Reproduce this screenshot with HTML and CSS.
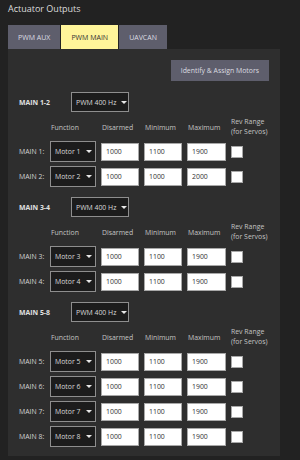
FILE: index.html
```html
<!DOCTYPE html>
<html lang="en">
<head>
    <meta charset="UTF-8">
    <meta name="viewport" content="width=device-width, initial-scale=1.0">
    <title>Actuator Outputs</title>
    <link rel="stylesheet" href="styles.css">
</head>
<body>
    <h1 class="title">Actuator Outputs</h1>

    <div class="tabs">
        <button type="button" class="tab">PWM AUX</button>
        <button type="button" class="tab active">PWM MAIN</button>
        <button type="button" class="tab">UAVCAN</button>
    </div>

    <div class="panel">
        <div class="toolbar">
            <button type="button" class="btn">Identify &amp; Assign Motors</button>
        </div>

        <!-- MAIN 1-2 -->
        <section class="group">
            <div class="group-head">
                <span class="group-name">MAIN 1-2</span>
                <div class="select rate">PWM 400 Hz <span class="caret"></span></div>
            </div>
            <div class="grid">
                <span></span>
                <span class="col">Function</span>
                <span class="col">Disarmed</span>
                <span class="col">Minimum</span>
                <span class="col">Maximum</span>
                <span class="col rev">Rev Range<br>(for Servos)</span>

                <span class="ch">MAIN 1:</span>
                <div class="select">Motor 1 <span class="caret"></span></div>
                <input type="text" value="1000">
                <input type="text" value="1100">
                <input type="text" value="1900">
                <input type="checkbox">

                <span class="ch">MAIN 2:</span>
                <div class="select">Motor 2 <span class="caret"></span></div>
                <input type="text" value="1000">
                <input type="text" value="1000">
                <input type="text" value="2000">
                <input type="checkbox">
            </div>
        </section>

        <!-- MAIN 3-4 -->
        <section class="group">
            <div class="group-head">
                <span class="group-name">MAIN 3-4</span>
                <div class="select rate">PWM 400 Hz <span class="caret"></span></div>
            </div>
            <div class="grid">
                <span></span>
                <span class="col">Function</span>
                <span class="col">Disarmed</span>
                <span class="col">Minimum</span>
                <span class="col">Maximum</span>
                <span class="col rev">Rev Range<br>(for Servos)</span>

                <span class="ch">MAIN 3:</span>
                <div class="select">Motor 3 <span class="caret"></span></div>
                <input type="text" value="1000">
                <input type="text" value="1100">
                <input type="text" value="1900">
                <input type="checkbox">

                <span class="ch">MAIN 4:</span>
                <div class="select">Motor 4 <span class="caret"></span></div>
                <input type="text" value="1000">
                <input type="text" value="1100">
                <input type="text" value="1900">
                <input type="checkbox">
            </div>
        </section>

        <!-- MAIN 5-8 -->
        <section class="group">
            <div class="group-head">
                <span class="group-name">MAIN 5-8</span>
                <div class="select rate">PWM 400 Hz <span class="caret"></span></div>
            </div>
            <div class="grid">
                <span></span>
                <span class="col">Function</span>
                <span class="col">Disarmed</span>
                <span class="col">Minimum</span>
                <span class="col">Maximum</span>
                <span class="col rev">Rev Range<br>(for Servos)</span>

                <span class="ch">MAIN 5:</span>
                <div class="select">Motor 5 <span class="caret"></span></div>
                <input type="text" value="1000">
                <input type="text" value="1100">
                <input type="text" value="1900">
                <input type="checkbox">

                <span class="ch">MAIN 6:</span>
                <div class="select">Motor 6 <span class="caret"></span></div>
                <input type="text" value="1000">
                <input type="text" value="1100">
                <input type="text" value="1900">
                <input type="checkbox">

                <span class="ch">MAIN 7:</span>
                <div class="select">Motor 7 <span class="caret"></span></div>
                <input type="text" value="1000">
                <input type="text" value="1100">
                <input type="text" value="1900">
                <input type="checkbox">

                <span class="ch">MAIN 8:</span>
                <div class="select">Motor 8 <span class="caret"></span></div>
                <input type="text" value="1000">
                <input type="text" value="1100">
                <input type="text" value="1900">
                <input type="checkbox">
            </div>
        </section>
    </div>
</body>
</html>
```

FILE: styles.css
```css
body {
    font-family: "Open Sans", Arial, sans-serif;
    background-color: #222222;
    color: #d2d2d2;
    margin: 0;
    padding: 0 8px;
    font-size: 6.9px;
}
.title {
    margin: 0;
    font-size: 9px;
    font-weight: normal;
    line-height: 18px;
    color: #dcdcdc;
}
.tabs {
    display: flex;
    gap: 1px;
    margin-top: 7px;
}
.tab {
    font-family: inherit;
    font-size: 7px;
    height: 24px;
    padding: 0 10px;
    border: none;
    background-color: #5e5e6c;
    color: #dcdce2;
}
.tab.active {
    background-color: #fff59a;
    color: #333333;
}
.panel {
    background-color: #2e2e2e;
    width: 272px;
    box-sizing: border-box;
    padding: 11px 11px 9px 11px;
}
.toolbar {
    display: flex;
    justify-content: flex-end;
}
.btn {
    font-family: inherit;
    font-size: 6.9px;
    height: 21px;
    padding: 0 10px;
    border: none;
    background-color: #5e5e6c;
    color: #dcdce0;
}
.group {
    margin-top: 10px;
}
.toolbar + .group {
    margin-top: 11px;
}
.group-head {
    display: flex;
    align-items: center;
    height: 20px;
}
.group-name {
    font-weight: bold;
    width: 52px;
    color: #e0e0e0;
}
.select {
    display: flex;
    align-items: center;
    gap: 5px;
    box-sizing: border-box;
    height: 21px;
    padding: 0 4px;
    background-color: #1c1c1c;
    border: 1px solid #8e8e8e;
    color: #d8d8d8;
    white-space: nowrap;
}
.select.rate {
    width: 58px;
    height: 20px;
}
.caret {
    flex: none;
    width: 0;
    height: 0;
    border-left: 3px solid transparent;
    border-right: 3px solid transparent;
    border-top: 3px solid #e8e8e8;
}
.grid {
    display: grid;
    grid-template-columns: 26px 46px 38px 38px 39px 12px;
    grid-template-rows: 20px;
    grid-auto-rows: 21px;
    column-gap: 5px;
    row-gap: 4px;
    margin-top: 5px;
    align-items: center;
}
.col {
    color: #c4c4c4;
    padding-left: 1px;
    white-space: nowrap;
}
.rev {
    line-height: 10px;
    padding-left: 0;
}
.ch {
    color: #d2d2d2;
    white-space: nowrap;
}
.grid input[type="text"] {
    font-family: inherit;
    font-size: 6.9px;
    box-sizing: border-box;
    width: 100%;
    height: 18px;
    margin: 0;
    padding: 0 4px;
    border: 1px solid #a8a8a8;
    background-color: #ffffff;
    color: #303030;
}
.grid input[type="checkbox"] {
    appearance: none;
    width: 12px;
    height: 12px;
    margin: 0;
    border: 1px solid #a8a8a8;
    background-color: #ffffff;
}
```
